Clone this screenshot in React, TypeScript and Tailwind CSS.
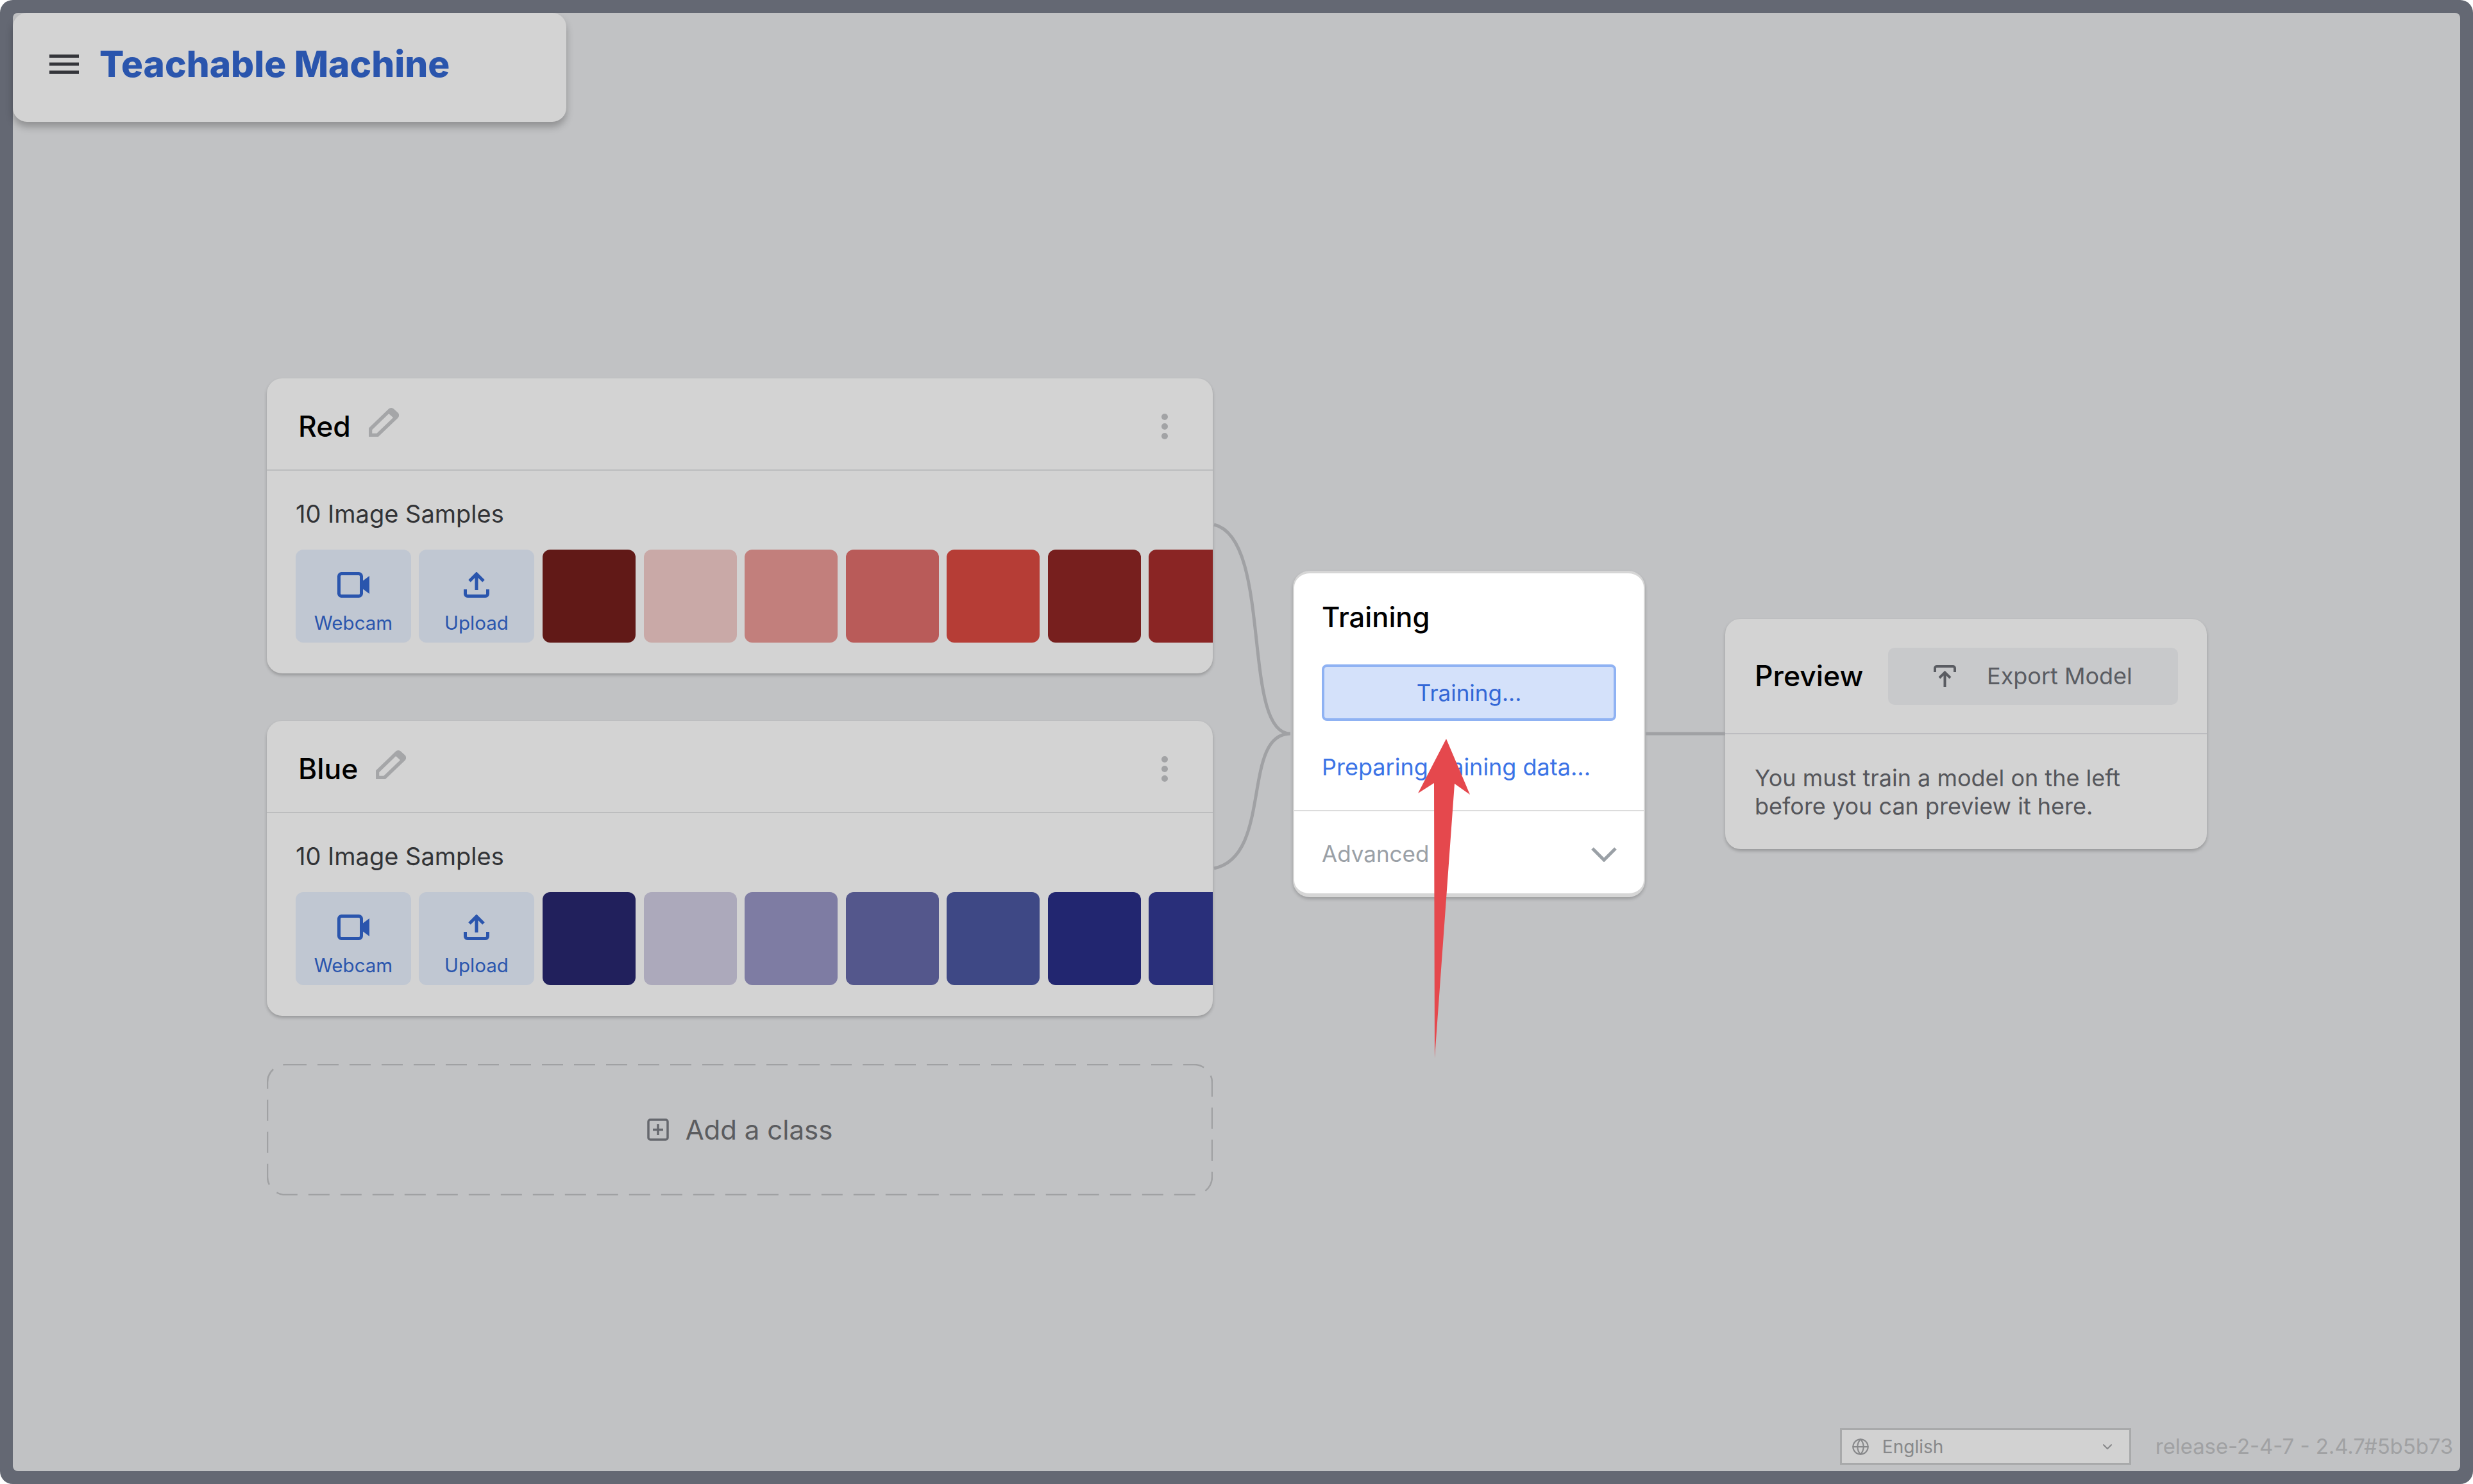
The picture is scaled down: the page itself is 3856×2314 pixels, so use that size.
import { ChevronDown, Globe } from "lucide-react";

const redSamples = ["#611917", "#c9a9a7", "#c27f7c", "#b95b59", "#b63d36", "#771f1e", "#8a2524"];
const blueSamples = ["#21205c", "#aca9bb", "#7e7ca3", "#54578c", "#3e4885", "#222670", "#292f7a"];

function PencilIcon() {
	return (
		<svg aria-hidden="true" className="h-[45px] w-[47px] shrink-0" viewBox="0 0 47 45">
			<path
				d="M2.5 42.5V33L33 3.5a3 3 0 0 1 4 0l6.500 6a3 3 0 0 1 0 4.200L13.500 42.500Z"
				fill="none"
				stroke="#a5a6a8"
				strokeWidth="5.500"
			/>
			<path d="M29 7l11 10 6-6-10-10Z" fill="#a5a6a8" />
		</svg>
	);
}

function ClassCard({ name, samples }: { name: string; samples: string[] }) {
	return (
		<section className="h-[460px] w-[1475px] overflow-hidden rounded-[24px] bg-[#d3d3d3] shadow-[0_3px_5px_rgba(0,0,0,0.22)]">
			<header className="flex h-[142px] items-center pt-[8px] pr-[70px] pl-[49px]">
				<h2 className="text-[44.500px] leading-[52px] font-medium text-black">{name}</h2>
				<div className="mb-[14px] ml-[28px]">
					<PencilIcon />
				</div>
				<div className="ml-auto flex flex-col gap-[5px]">
					<span className="size-[10px] rounded-full bg-[#a2a3a5]" />
					<span className="size-[10px] rounded-full bg-[#a2a3a5]" />
					<span className="size-[10px] rounded-full bg-[#a2a3a5]" />
				</div>
			</header>
			<div className="h-[2px] bg-[#bcbdbe]" />
			<div className="pt-[43px] pl-[45px]">
				<p className="text-[38px] leading-[48px] text-[#323336]">10 Image Samples</p>
				<div className="mt-[32px] flex h-[145px]">
					<button className="flex h-[145px] w-[180px] shrink-0 flex-col items-center rounded-[12px] bg-[#c0c7d2] pt-[35px] text-[29.500px] leading-[40px] text-[#2a55ad]" type="button">
						<svg aria-hidden="true" className="h-[40px] w-[50px]" viewBox="0 0 50 40">
							<rect fill="none" height="35" rx="4" stroke="#2a55ad" strokeWidth="5" width="35" x="2.500" y="2.500" />
							<path d="M38 15 50 6v28L38 25Z" fill="#2a55ad" />
						</svg>
						<span className="mt-[19px]">Webcam</span>
					</button>
					<button className="ml-[12px] flex h-[145px] w-[180px] shrink-0 flex-col items-center rounded-[12px] bg-[#c0c7d2] pt-[35px] text-[29.500px] leading-[40px] text-[#2a55ad]" type="button">
						<svg aria-hidden="true" className="h-[40px] w-[40px]" viewBox="0 0 40 40">
							<path d="M2.500 27v7a3.500 3.500 0 0 0 3.500 3.500h28a3.500 3.500 0 0 0 3.500-3.500v-7" fill="none" stroke="#2a55ad" strokeWidth="5" />
							<path d="M20 28V4M9 14 20 3l11 11" fill="none" stroke="#2a55ad" strokeWidth="5" />
						</svg>
						<span className="mt-[19px]">Upload</span>
					</button>
					<div className="ml-[13px] flex gap-[12.500px]">
						{samples.map((color, index) => (
							<div
								className="h-[145px] w-[145px] shrink-0 rounded-[12px]"
								key={`${color}-${index}`}
								style={{ backgroundColor: color }}
							/>
						))}
					</div>
				</div>
			</div>
		</section>
	);
}

function AddClass() {
	return (
		<button className="relative mt-[75px] flex h-[205px] w-[1475px] items-center justify-center text-[42px] text-[#5b5c5f]" type="button">
			<svg aria-hidden="true" className="absolute inset-0 h-full w-full" viewBox="0 0 1475 205">
				<rect
					fill="none"
					height="203"
					rx="28"
					stroke="#a0a1a3"
					strokeDasharray="33 17"
					strokeWidth="2.500"
					width="1473"
					x="1"
					y="1"
				/>
			</svg>
			<svg aria-hidden="true" className="mr-[26px] h-[35px] w-[34px]" viewBox="0 0 34 35">
				<rect fill="none" height="31" rx="3" stroke="#66686e" strokeWidth="3.500" width="30" x="2" y="2" />
				<path d="M17 9v17M9 17.500h16" stroke="#66686e" strokeWidth="3.500" />
			</svg>
			<span className="leading-[56px]">Add a class</span>
		</button>
	);
}

function TrainingCard() {
	return (
		<section className="mt-[300px] ml-[125px] h-[509px] w-[549px] overflow-hidden rounded-[26px] border-x-2 border-t-4 border-b-[6px] border-[#d6d6d6] bg-white shadow-[0_3px_5px_rgba(0,0,0,0.2)]">
			<div className="px-[43px] pt-[40px]">
				<h2 className="text-[43.500px] leading-[56px] font-medium text-black">Training</h2>
				<button className="mt-[46px] flex h-[88px] w-[459px] items-center justify-center rounded-[8px] border-4 border-[#8fb2f3] bg-[#d4e1fa] text-[35px] text-[#3367d6]" type="button">
					Training...
				</button>
				<p className="mt-[48px] text-[36px] leading-[48px] text-[#3b73e6]">Preparing training data...</p>
			</div>
			<div className="mt-[43px] h-[2px] bg-[#dcdcdc]" />
			<div className="flex h-[127px] items-center justify-between pt-[6px] pr-[42px] pl-[43px]">
				<span className="text-[35px] text-[#9aa0a6]">Advanced</span>
				<svg aria-hidden="true" className="h-[24px] w-[40px]" viewBox="0 0 40 24">
					<path d="M2 3l18 18L38 3" fill="none" stroke="#9aa0a6" strokeWidth="5" />
				</svg>
			</div>
		</section>
	);
}

function PreviewCard() {
	return (
		<section className="mt-[375px] ml-[125px] h-[359px] w-[751px] overflow-hidden rounded-[24px] bg-[#d3d3d3] shadow-[0_3px_5px_rgba(0,0,0,0.22)]">
			<header className="flex h-[178px] items-center pl-[46px]">
				<h2 className="w-[208px] shrink-0 text-[44.500px] leading-[56px] font-medium text-black">Preview</h2>
				<button className="flex h-[89px] w-[452px] items-center rounded-[10px] bg-[#c8c9cb] pl-[71px] text-[36px] text-[#5a5c62]" type="button">
					<svg aria-hidden="true" className="h-[34px] w-[35px]" viewBox="0 0 35 34">
						<path d="M2 11V5a3 3 0 0 1 3-3h25a3 3 0 0 1 3 3v6" fill="none" stroke="#5a5c62" strokeWidth="4" />
						<path d="M17.500 34V12M9 20l8.500-8.500L26 20" fill="none" stroke="#5a5c62" strokeWidth="4" />
					</svg>
					<span className="ml-[48px]">Export Model</span>
				</button>
			</header>
			<div className="h-[2px] bg-[#bcbcc0]" />
			<p className="pt-[46px] pl-[46px] text-[36px] leading-[44px] text-[#55565b]">
				You must train a model on the left
				<br />
				before you can preview it here.
			</p>
		</section>
	);
}

export default function App() {
	return (
		<div className="relative h-[2314px] w-[3856px] overflow-hidden bg-white font-['Inter','Liberation_Sans',sans-serif]">
			<div className="h-full rounded-[20px] bg-[#646873] p-[20px]">
				<main className="flex h-full flex-col rounded-[8px] bg-[#c1c2c4]">
					<header className="flex h-[170px] w-[863px] items-center rounded-[22px] bg-[#d3d3d3] pb-[10px] pl-[57px] shadow-[0_8px_12px_rgba(0,0,0,0.25)]">
						<svg aria-hidden="true" className="h-[30px] w-[46px]" viewBox="0 0 46 30">
							<path d="M0 2.500h46M0 15h46M0 27.500h46" stroke="#34353a" strokeWidth="5" />
						</svg>
						<h1 className="ml-[32px] text-[56.700px] leading-[70px] font-extrabold text-[#2a55ad]">Teachable Machine</h1>
					</header>
					<div className="mt-[400px] flex items-start pl-[396px]">
						<div className="flex flex-col">
							<ClassCard name="Red" samples={redSamples} />
							<div className="mt-[74px]">
								<ClassCard name="Blue" samples={blueSamples} />
							</div>
							<AddClass />
						</div>
						<TrainingCard />
						<PreviewCard />
					</div>
					<footer className="mt-auto flex items-center justify-end gap-[38px] pr-[11px] pb-[10px]">
						<div className="flex h-[57px] w-[454px] items-center border-[3px] border-[#a8a9aa] bg-[#d2d2d2] pr-[22px] pl-[15px] text-[28px] text-[#87888a]">
							<Globe className="size-[28px]" strokeWidth={1.800} />
							<span className="ml-[20px]">English</span>
							<ChevronDown className="ml-auto size-[24px]" strokeWidth={2} />
						</div>
						<span className="text-[32.800px] text-[#a0a1a3]">release-2-4-7 - 2.4.7#5b5b73</span>
					</footer>
				</main>
			</div>
			<svg aria-hidden="true" className="pointer-events-none absolute inset-0 h-full w-full" viewBox="0 0 3856 2314">
				<path
					d="M1893 818C1985 840 1935 1144 2012 1144C1935 1144 1985 1335 1893 1354M2566 1144H2690"
					fill="none"
					stroke="#a0a1a4"
					strokeWidth="5"
				/>
				<path d="M2255 1152 2292 1239 2268 1222 2237 1650 2236 1221 2211 1237Z" fill="#e5484d" />
			</svg>
		</div>
	);
}
